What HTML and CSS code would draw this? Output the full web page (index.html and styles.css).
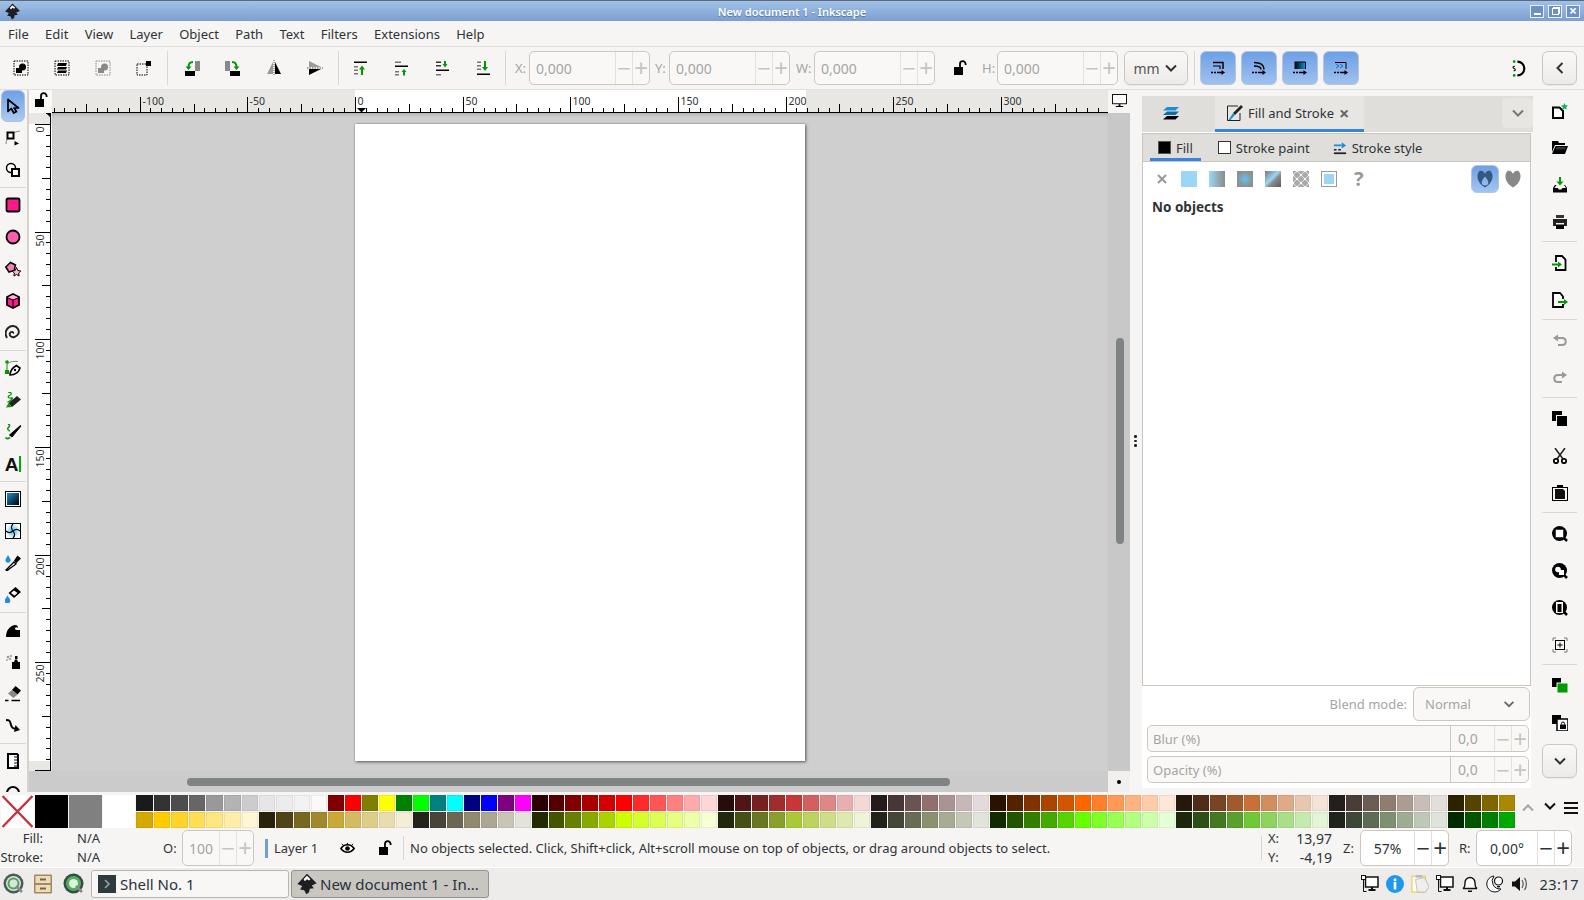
FILE: index.html
```html
<!DOCTYPE html>
<html lang="en">
<head>
<meta charset="utf-8">
<title>New document 1 - Inkscape</title>
<link rel="stylesheet" href="styles.css">
</head>
<body>
<svg class="sprite" xmlns="http://www.w3.org/2000/svg">
<defs>
<linearGradient id="gblue" x1="0" y1="0" x2="1" y2="1"><stop offset="0" stop-color="#1b8fd8"/><stop offset="1" stop-color="#000"/></linearGradient>
<linearGradient id="gbar" x1="0" y1="0" x2="1" y2="0"><stop offset="0" stop-color="#000"/><stop offset="1" stop-color="#1b8fd8"/></linearGradient>
<radialGradient id="gmesh"><stop offset="0" stop-color="#3fb8f5"/><stop offset="1" stop-color="#fff"/></radialGradient>
<symbol id="logo" viewBox="0 0 16 16"><path d="M8 0.500 15 7.500 11.500 9 13 11 10 11.500 9.500 14 7.500 15.500 6 12.500 3 12 4.500 9.500 1 8z" fill="#1d1d22"/><path d="M8 2 10.500 4.500 9.500 5.500 8 4.500 6.500 6 5.500 4.500z" fill="#fff"/></symbol>
<symbol id="sel-all" viewBox="0 0 16 16"><rect x="1" y="1" width="14" height="14" fill="none" stroke="#000" stroke-dasharray="1.500 1"/><circle cx="9.500" cy="7" r="3.500"/><rect x="3" y="8" width="6" height="5"/></symbol>
<symbol id="sel-layers" viewBox="0 0 16 16"><rect x="1" y="1" width="14" height="14" fill="none" stroke="#000" stroke-dasharray="1.500 1"/><path d="M4 3h9l-1 3H3zM4 7h9l-1 2.500H3zM4 10.500h9l-1 2.500H3z"/></symbol>
<symbol id="sel-none" viewBox="0 0 16 16"><rect x="1" y="1" width="14" height="14" fill="none" stroke="#888" stroke-dasharray="1.500 1"/><circle cx="9.500" cy="7" r="3.500" fill="#888"/><rect x="3" y="8" width="6" height="5" fill="#888"/></symbol>
<symbol id="sel-touch" viewBox="0 0 16 16"><rect x="1" y="4" width="10" height="11" fill="none" stroke="#000" stroke-dasharray="1.500 1"/><rect x="10" y="1" width="5" height="5"/></symbol>
<symbol id="rot-ccw" viewBox="0 0 16 16"><rect x="1" y="11" width="10" height="5"/><rect x="11" y="1" width="5" height="10" fill="#888"/><path d="M9 2C6 2 4.500 4 4.500 7" fill="none" stroke="#090" stroke-width="2"/><path d="M1.500 6.500h6L4.500 10z" fill="#090"/></symbol>
<symbol id="rot-cw" viewBox="0 0 16 16"><rect x="5" y="11" width="10" height="5"/><rect x="0" y="1" width="5" height="10" fill="#888"/><path d="M7 2c3 0 4.500 2 4.500 5" fill="none" stroke="#090" stroke-width="2"/><path d="M8.500 6.500h6L11.500 10z" fill="#090"/></symbol>
<symbol id="flip-h" viewBox="0 0 16 16"><path d="M7 2v12H1z" fill="#999"/><path d="M9 2v12h6z"/><path d="M8 0v16" stroke="#555" stroke-dasharray="1 1"/></symbol>
<symbol id="flip-v" viewBox="0 0 16 16"><path d="M2 1v6h12z" fill="#999"/><path d="M2 15V9h12z"/><path d="M0 8h16" stroke="#555" stroke-dasharray="1.500 1"/></symbol>
<symbol id="raise-top" viewBox="0 0 16 16"><path d="M1 1.500h13v1.500H1z"/><path d="M1 6h4v1.500H1zM1 9.500h4V11H1zM1 13h4v1.500H1z" fill="#777"/><path d="M9 15V8" stroke="#090" stroke-width="2"/><path d="M6 9.500 9 5.500 12 9.500z" fill="#090"/></symbol>
<symbol id="raise" viewBox="0 0 16 16"><path d="M1 1.500h6V3H1zM1 11h4v1.500H1zM1 14h4v1.500H1z" fill="#777"/><path d="M1 5.500h13V7H1z"/><path d="M10 15.500V11" stroke="#090" stroke-width="2"/><path d="M7.500 12 10 9l2.500 3z" fill="#090"/></symbol>
<symbol id="lower" viewBox="0 0 16 16"><path d="M1 1.500h5V3H1zM1 5h5v1.500H1z" fill="#333"/><path d="M1 14h5v1.500H1z" fill="#777"/><path d="M1 9.500h13V11H1z"/><path d="M10 1v4" stroke="#090" stroke-width="2"/><path d="M7.500 4 10 7.500 12.500 4z" fill="#090"/></symbol>
<symbol id="lower-bot" viewBox="0 0 16 16"><path d="M1 1.500h4V3H1zM1 5h4v1.500H1zM1 8.500h4V10H1z" fill="#777"/><path d="M1 13.500h13V15H1z"/><path d="M9 1v7" stroke="#090" stroke-width="2"/><path d="M6 7 9 11 12 7z" fill="#090"/></symbol>
<symbol id="lock" viewBox="0 0 16 16"><rect x="2" y="7" width="9" height="8"/><path d="M8 7V4a2.800 2.800 0 0 1 5.600 0v1" fill="none" stroke="#000" stroke-width="1.800"/></symbol>
<symbol id="snap-box" viewBox="0 0 16 16"><path d="M3 2.500h10V9" fill="none" stroke="#000" stroke-width="1.500"/><path d="M3 6h7v3" fill="none" stroke="#000" stroke-width="1.200"/><path d="M1 12.500h2m1 0h2m1 0h5" stroke="#000" stroke-width="1.500"/><path d="M11.500 10 15 12.500 11.500 15z"/></symbol>
<symbol id="snap-node" viewBox="0 0 16 16"><path d="M3 2.500c6 0 10 2 10 7M3 6c4 0 7 1 7 3.500" fill="none" stroke="#000" stroke-width="1.500"/><path d="M1 12.500h2m1 0h2m1 0h5" stroke="#000" stroke-width="1.500"/><path d="M11.500 10 15 12.500 11.500 15z"/></symbol>
<symbol id="snap-bitmap" viewBox="0 0 16 16"><rect x="2.500" y="2" width="11" height="7" fill="url(#gbar)"/><path d="M2.500 2h11v7" fill="none" stroke="#000"/><path d="M1 12.500h2m1 0h2m1 0h5" stroke="#000" stroke-width="1.500"/><path d="M11.500 10 15 12.500 11.500 15z"/></symbol>
<symbol id="snap-other" viewBox="0 0 16 16"><path d="M2 2.500h11V9" fill="none" stroke="#000"/><path d="M3 4l3 2-3 2M7 4l3 2-3 2" fill="none" stroke="#1b6fc0"/><path d="M1 12.500h2m1 0h2m1 0h5" stroke="#000" stroke-width="1.500"/><path d="M11.500 10 15 12.500 11.500 15z"/></symbol>
<symbol id="snap-main" viewBox="0 0 16 16"><path d="M6 1.500a6.500 6.500 0 1 1 0 13" fill="none" stroke="#000" stroke-width="2"/><circle cx="3" cy="1.500" r="1.300" fill="#090"/><circle cx="3" cy="14.500" r="1.300" fill="#090"/><path d="M3.500 6c-2-.5-2 1.500-.5 2s1.500 2.500-.5 2" fill="none" stroke="#000"/></symbol>
<symbol id="layers" viewBox="0 0 16 16"><path d="M4 2h12l-3.500 3.500H0z" fill="#1b8fd8"/><path d="M4 6.500h12l-3.500 3.500H0z" fill="#0d6fa8"/><path d="M4 11h12l-3.500 3.500H0z"/></symbol>
<symbol id="fillstroke" viewBox="0 0 16 16"><path d="M11 1H.5v14.500H13V8" fill="none" stroke="#222"/><path d="M14 0 16 2 8 10 6 8z" fill="#222"/><path d="M6 8 8 10 3.500 15H1.500z" fill="#1b8fd8"/></symbol>
<symbol id="strokestyle" viewBox="0 0 16 16"><path d="M1 5h9" stroke="#1b8fd8" stroke-width="2"/><path d="M10 1.500 15 5l-5 3.500z" fill="#1b8fd8"/><path d="M1 10h3m2 0h3" stroke="#222" stroke-width="1.500"/><path d="M1 14h14" stroke="#222" stroke-width="2"/></symbol>
<symbol id="chev-d" viewBox="0 0 16 16"><path d="M3 5.500 8 10.500 13 5.500" fill="none" stroke="currentColor" stroke-width="2"/></symbol>
<symbol id="chev-u" viewBox="0 0 16 16"><path d="M3 10.500 8 5.500 13 10.500" fill="none" stroke="currentColor" stroke-width="2"/></symbol>
<symbol id="chev-l" viewBox="0 0 16 16"><path d="M10.500 3 5.500 8 10.500 13" fill="none" stroke="currentColor" stroke-width="2"/></symbol>
<symbol id="fill-x" viewBox="0 0 16 16"><path d="M4 4l8 8M12 4l-8 8" stroke="#999" stroke-width="2"/></symbol>
<symbol id="rule-eo" viewBox="0 0 20 20"><path fill-rule="evenodd" d="M4.500 2C1 5 1.500 14 10 18.500 18.500 14 19 5 15.500 2 13 1 10.800 2.500 10 5 9.200 2.500 7 1 4.500 2zM10 7.500c-2.200 2.700-3.300 4.300-3.300 5.800a3.300 3.300 0 0 0 6.600 0c0-1.500-1.100-3.100-3.300-5.800z" fill="#33597f"/></symbol>
<symbol id="rule-nz" viewBox="0 0 20 20"><path d="M4.500 2C1 5 1.500 14 10 18.500 18.500 14 19 5 15.500 2 13 1 10.800 2.500 10 5 9.200 2.500 7 1 4.500 2z" fill="#888"/></symbol>
<symbol id="t-select" viewBox="0 0 16 16"><path d="M3 1.500v12l3.200-3 2.600 4.500 2.700-1.400L9 10h4.500z" fill="none" stroke="#000" stroke-width="1.700" stroke-linejoin="round"/></symbol>
<symbol id="t-node" viewBox="0 0 16 16"><path d="M1 14C1 7 7 2 15 1" fill="none" stroke="#888"/><rect x="2.500" y="2.500" width="6" height="6" fill="#fff" stroke="#000" stroke-width="2"/><path d="M9.500 11 14 13.500 9.500 15.500z"/></symbol>
<symbol id="t-tweak" viewBox="0 0 16 16"><circle cx="6" cy="6" r="4.500" fill="#fff" stroke="#000" stroke-width="1.500"/><rect x="7" y="7" width="7" height="7" fill="#fff" stroke="#000" stroke-width="2"/></symbol>
<symbol id="t-rect" viewBox="0 0 16 16"><rect x="1.500" y="1.500" width="13" height="13" rx="1.500" fill="#ff1a8c" stroke="#000" stroke-width="1.800"/></symbol>
<symbol id="t-circle" viewBox="0 0 16 16"><circle cx="8" cy="8" r="6.500" fill="#ff5cab" stroke="#000" stroke-width="1.800"/></symbol>
<symbol id="t-star" viewBox="0 0 16 16"><path d="M.8 6 5.500 1.500 10.500 4 9 9.500 4 11z" fill="#ff7ab8" stroke="#000" stroke-width="1.500"/><path d="M11.500 6.500 12.800 9.500 15.800 10 13.600 12l.5 3-2.600-1.500L8.900 15l.5-3L7.200 10l3-.5z" fill="#ffb3d9" stroke="#000"/></symbol>
<symbol id="t-box" viewBox="0 0 16 16"><path d="M8 1l6 3v8l-6 3-6-3V4z" fill="#ff1a8c" stroke="#000" stroke-width="1.800"/><path d="M2.500 4.500 8 7l5.500-2.500L8 2z" fill="#ffb3d9"/><path d="M8 7v8M2 4.500 8 7l6-2.500" fill="none" stroke="#000"/></symbol>
<symbol id="t-spiral" viewBox="0 0 16 16"><path d="M8 8.500c1-1.500-2-2.500-3-.5s1 5 4.500 4S15 7.500 13 4 6 0 3 3 0 9.500 2 13" fill="none" stroke="#222" stroke-width="1.900"/></symbol>
<symbol id="t-pen" viewBox="0 0 16 16"><path d="M2 4C5 1.500 9 1 13 1.500" fill="none" stroke="#888"/><circle cx="2" cy="2" r="1.800" fill="#090"/><rect x="0" y="10" width="4" height="4" fill="#090"/><path d="M2 4v6" stroke="#090"/><path d="M5 15c0-4.500 3-7.500 6.500-9.500L15 8c-1 3.500-4.500 7-10 7z" fill="#fff" stroke="#000" stroke-width="1.700"/><circle cx="10" cy="10" r="1.200"/></symbol>
<symbol id="t-pencil" viewBox="0 0 16 16"><path d="M3 0c4 0 4 2.500 1.500 3.500s-1 3 2 2.500-2 4-4 4" fill="none" stroke="#090" stroke-width="1.300"/><path d="M3.500 11 12 4l4 3.500-9 7.500z" fill="#222"/><path d="M1 15.500l2.500-4.500 3.500 4z" fill="#090"/></symbol>
<symbol id="t-calli" viewBox="0 0 16 16"><path d="M3 0c3 1 1 3 0 4s1 3 2 3" fill="none" stroke="#090" stroke-width="1.500"/><path d="M.5 13.500c1 1.500 3 1 4.500 0" fill="none" stroke="#090" stroke-width="1.700"/><path d="M4.500 11 15.500 1.500l.5.500L7 13z" fill="#000" stroke="#000"/></symbol>
<symbol id="t-grad" viewBox="0 0 16 16"><rect x=".5" y=".5" width="15" height="15" fill="#fff" stroke="#000"/><rect x="2" y="2" width="12" height="12" fill="url(#gblue)"/></symbol>
<symbol id="t-mesh" viewBox="0 0 16 16"><rect x=".5" y=".5" width="15" height="15" fill="url(#gmesh)" stroke="#000"/><path d="M8 8C6 5.500 6 3 8 1M8 8c2.500-2 5-2 7 0M8 8c2 2.500 2 5 0 7M8 8c-2.500 2-5 2-7 0" fill="none" stroke="#000" stroke-width="1.100"/></symbol>
<symbol id="t-dropper" viewBox="0 0 16 16"><path d="M3 0 .5 4.500a2.600 2.600 0 1 0 5 0z" fill="#1b8fd8"/><path d="M3.500 14.500 2 16l-1-1 1.500-1.500L9 7l2 2z" fill="#fff" stroke="#000" stroke-width="1.300"/><path d="M9 5.500 12.500.5 16 3.500 11 8.500z" fill="#000"/></symbol>
<symbol id="t-bucket" viewBox="0 0 16 16"><path d="M10.500 0 16 5 9 11 3.500 6z" fill="#000"/><path d="M9 3.500 12.500 6 9.500 8.500 6 6z" fill="#fff"/><path d="M2.500 8.500 0 12.500a2.800 2.800 0 1 0 5 0z" fill="#1b8fd8"/></symbol>
<symbol id="t-wave" viewBox="0 0 16 16"><path d="M1 15c0-6 3-11 9-12 2 0 3 1 3 3-1-1-3-1-3 1 0 1 2 1 5 1v7z"/></symbol>
<symbol id="t-spray" viewBox="0 0 16 16"><rect x="7" y="8" width="8" height="7"/><path d="M9 8l1-2.500h2L13 8z"/><rect x="10" y="2" width="2.500" height="3"/><circle cx="3" cy="3" r="1.300" fill="#999"/><circle cx="6" cy="2" r="1.100" fill="#999"/><circle cx="5" cy="5" r="1.300" fill="#aaa"/><circle cx="2" cy="6" r="1" fill="#aaa"/></symbol>
<symbol id="t-eraser" viewBox="0 0 16 16"><path d="M10.500 0 16 4.500 12.500 8.500 7 4z"/><path d="M7 4 12.500 8.500 8.500 12 3 7.500z" fill="#888"/><path d="M0 14.500h3.500m3 0H15" stroke="#000" stroke-width="1.500"/></symbol>
<symbol id="t-conn" viewBox="0 0 16 16"><path d="M1 2c4 0 4 1 5 5s3 3.500 6 4" fill="none" stroke="#000" stroke-width="2"/><path d="M10.500 7 15 12l-6 2z"/></symbol>
<symbol id="t-measure" viewBox="0 0 16 16"><path d="M3 1h9l1 1v13H3z" fill="#fff" stroke="#000" stroke-width="2"/><path d="M9 4h4M9 7h4M9 10h4M9 13h4" stroke="#000"/></symbol>
<symbol id="t-zoom" viewBox="0 0 16 16"><circle cx="8" cy="8" r="6" fill="none" stroke="#000" stroke-width="2"/></symbol>
<symbol id="r-new" viewBox="0 0 16 16"><path d="M1 4.500h6.500L11 8v7H1z" fill="#fff" stroke="#000" stroke-width="2"/><path d="M12.500 0l1.100 2.300 2.400.3-1.800 1.700.5 2.500-2.200-1.200-2.200 1.200.5-2.500L9 2.600l2.400-.3z" fill="#0b5"/></symbol>
<symbol id="r-open" viewBox="0 0 16 16"><path d="M0 1h6l1 2h6v2H3L0 12z"/><path d="M3.500 6H16l-3 8H0z"/><path d="M4.500 7h9.500l-1 2.500H3.500z" fill="#333"/></symbol>
<symbol id="r-save" viewBox="0 0 16 16"><path d="M8 0v5" stroke="#090" stroke-width="2"/><path d="M4.500 4.500 8 8.500l3.500-4z" fill="#090"/><path d="M3 8 1 11v4.500h14V11l-2-3h-1l2 3h-3.500L9.500 12.500h-3L6 11H2.500l2-3z"/></symbol>
<symbol id="r-print" viewBox="0 0 16 16"><rect x="4" y="1" width="8" height="3" fill="#333"/><path d="M1 5h14v7h-3V9H4v3H1z" fill="#222"/><rect x="4" y="10.500" width="8" height="4.500"/></symbol>
<symbol id="r-import" viewBox="0 0 16 16"><path d="M4 7V1h6l3.500 3.500V15H4v-3" fill="#fff" stroke="#000" stroke-width="1.800"/><path d="M0 9.500h7" stroke="#090" stroke-width="2"/><path d="M6 6.500 10 9.500 6 12.500z" fill="#090"/></symbol>
<symbol id="r-export" viewBox="0 0 16 16"><path d="M11 7V4.500L8 1H1v14h10v-3" fill="#fff" stroke="#000" stroke-width="1.800"/><path d="M6 10h7" stroke="#090" stroke-width="2"/><path d="M12 7l4 3-4 3z" fill="#090"/></symbol>
<symbol id="r-undo" viewBox="0 0 16 16"><path d="M4 5h6c5 0 5 7 0 7H6" fill="none" stroke="#999" stroke-width="2"/><path d="M6 1.500v7L1 5z" fill="#999"/></symbol>
<symbol id="r-redo" viewBox="0 0 16 16"><path d="M12 5H6c-5 0-5 7 0 7h4" fill="none" stroke="#999" stroke-width="2"/><path d="M10 1.500v7L15 5z" fill="#999"/></symbol>
<symbol id="r-copy" viewBox="0 0 16 16"><rect x="0" y="0" width="10" height="10"/><rect x="4.500" y="4.500" width="11" height="11" stroke="#f6f5f4"/></symbol>
<symbol id="r-cut" viewBox="0 0 16 16"><path d="M3 0l8 11M13 0 5 11" stroke="#222" stroke-width="1.500"/><circle cx="4" cy="13" r="2.200" fill="none" stroke="#000" stroke-width="1.800"/><circle cx="12" cy="13" r="2.200" fill="none" stroke="#000" stroke-width="1.800"/></symbol>
<symbol id="r-paste" viewBox="0 0 16 16"><rect x=".5" y="2.500" width="15" height="13" fill="none" stroke="#000"/><path d="M3 4h8l2 2v8H3z" fill="#111"/><rect x="5" y="0" width="6" height="3"/></symbol>
<symbol id="r-zsel" viewBox="0 0 16 16"><circle cx="7.500" cy="7.500" r="7.500"/><rect x="3.500" y="3.500" width="8" height="8" fill="#fff" stroke="#000" stroke-dasharray="1 1" stroke-width="1"/><path d="M12 12l3 3" stroke="#000" stroke-width="2.500"/></symbol>
<symbol id="r-zdraw" viewBox="0 0 16 16"><circle cx="7.500" cy="7.500" r="7.500"/><circle cx="6" cy="6.500" r="2.800" fill="#fff"/><rect x="7" y="7" width="5" height="5" fill="#fff"/><path d="M12 12l3 3" stroke="#000" stroke-width="2.500"/></symbol>
<symbol id="r-zpage" viewBox="0 0 16 16"><circle cx="7.500" cy="7.500" r="7.500"/><rect x="4.500" y="2.500" width="6" height="10" fill="#fff" stroke="#fff"/><rect x="5.500" y="4" width="4" height="8"/><path d="M12 12l3 3" stroke="#000" stroke-width="2.500"/></symbol>
<symbol id="r-zcenter" viewBox="0 0 16 16"><path d="M1 4V1h3M12 1h3v3M15 12v3h-3M4 15H1v-3" fill="none" stroke="#777"/><rect x="3.500" y="3.500" width="9" height="9" fill="none" stroke="#000"/><path d="M8 5.500v5M5.500 8h5" stroke="#000"/></symbol>
<symbol id="r-dup" viewBox="0 0 16 16"><rect x="0" y="0" width="9" height="9"/><rect x="5" y="5" width="11" height="10" fill="#090" stroke="#f6f5f4"/></symbol>
<symbol id="r-clone" viewBox="0 0 16 16"><rect x="0" y="0" width="9" height="9"/><rect x="5" y="4" width="11" height="12" fill="#fff" stroke="#000" stroke-width="1.500"/><rect x="8" y="9.500" width="6" height="4.500"/><path d="M9.500 9.500v-1a1.500 1.500 0 0 1 3 0v1" fill="none" stroke="#000"/></symbol>
<symbol id="eye" viewBox="0 0 16 16"><path d="M1 8c2-3 4-4 7-4s5 1 7 4c-2 3-4 4-7 4s-5-1-7-4z" fill="#fff" stroke="#000" stroke-width="1.800"/><circle cx="8" cy="8" r="2.500"/><path d="M2 3l2 2M8 2v2M14 3l-2 2" stroke="#000"/></symbol>
<symbol id="ball" viewBox="0 0 22 22"><circle cx="10.500" cy="10.500" r="10" fill="#4a5a5a"/><circle cx="10.500" cy="10.500" r="7.500" fill="#d3e8d5"/><circle cx="10.500" cy="10.500" r="5" fill="none" stroke="#56a05c" stroke-width="2"/><path d="M13 13 19 19" stroke="#888" stroke-width="2.500"/></symbol>
<symbol id="ball2" viewBox="0 0 22 22"><circle cx="10.500" cy="10.500" r="10" fill="#3a4a4a"/><circle cx="10.500" cy="10.500" r="7.500" fill="#4fb158"/><circle cx="10.500" cy="10.500" r="4.500" fill="#dff0df"/><path d="M13 13 19 19" stroke="#888" stroke-width="2.500"/></symbol>
<symbol id="cabinet" viewBox="0 0 20 20"><rect x="1" y="0.500" width="18" height="19" rx="1" fill="#a4895c"/><rect x="2.500" y="2" width="15" height="7" fill="#ecdcbc"/><rect x="2.500" y="11" width="15" height="7" fill="#ecdcbc"/><rect x="7" y="4.500" width="6" height="2" fill="#7a6440"/><rect x="7" y="13.500" width="6" height="2" fill="#7a6440"/></symbol>
<symbol id="term" viewBox="0 0 18 18"><rect width="18" height="18" fill="#2f3a3c"/><path d="M7 5l4 4-4 4" fill="none" stroke="#9aa6a8" stroke-width="1.500"/></symbol>
<symbol id="tray-net" viewBox="0 0 18 18"><rect x="4.500" y="2" width="12.500" height="10" fill="#fff" stroke="#111" stroke-width="1.500"/><path d="M7.500 15h7M11 12v3" stroke="#111" stroke-width="2"/><rect x="0.500" y="0.500" width="4" height="4" fill="#fff" stroke="#111"/><path d="M2.500 4.500v12h3" fill="none" stroke="#111"/></symbol>
<symbol id="tray-info" viewBox="0 0 18 18"><circle cx="9" cy="9" r="9" fill="#1f97ee"/><rect x="7.700" y="7" width="2.600" height="7.500" fill="#fff"/><circle cx="9" cy="4.700" r="1.500" fill="#fff"/></symbol>
<symbol id="tray-clip" viewBox="0 0 20 20"><rect x="1" y="1.500" width="15" height="17.500" fill="#fff" stroke="#f3d54e" stroke-width="1.500"/><path d="M5 5 15 3l5 10-4 6-9 0z" fill="#eee" stroke="#bbb"/><rect x="5" y="0" width="8" height="3" rx="1" fill="#bbb"/></symbol>
<symbol id="tray-bell" viewBox="0 0 18 18"><path d="M2 13.500c2-1 2-3 2-6a5 5 0 0 1 10 0c0 3 0 5 2 6z" fill="#fff" stroke="#111" stroke-width="1.400"/><path d="M7 15.500h4V17H7z" fill="#111"/></symbol>
<symbol id="tray-moon" viewBox="0 0 18 18"><path d="M8 1a8 8 0 1 0 7 13A8 8 0 0 1 8 1z" fill="#fff" stroke="#111"/><circle cx="12.500" cy="6" r="4" fill="#fff" stroke="#111" stroke-width="1.200"/><path d="M11 11.500h3M11.500 13h2" stroke="#111"/></symbol>
<symbol id="tray-vol" viewBox="0 0 18 18"><path d="M1 6.500h3L9 2v14l-5-4.500H1z" fill="#111"/><path d="M11 5c1.500 2 1.500 6 0 8M13.500 3c2.500 3 2.500 9 0 12" fill="none" stroke="#555" stroke-width="1.200"/></symbol>
</defs>
</svg>

<div class="app">
  <header class="titlebar">
    <svg class="title-logo"><use href="#logo"/></svg>
    <span class="title-text">New document 1 - Inkscape</span>
    <div class="win-btns">
      <span class="win-btn"><i class="wb-min"></i></span>
      <span class="win-btn"><i class="wb-max"></i></span>
      <span class="win-btn wb-close">×</span>
    </div>
  </header>

  <nav class="menubar">
    <span>File</span><span>Edit</span><span>View</span><span>Layer</span><span>Object</span><span>Path</span><span>Text</span><span>Filters</span><span>Extensions</span><span>Help</span>
  </nav>

  <div class="toolbar">
    <span class="tb"><svg class="ic"><use href="#sel-all"/></svg></span>
    <span class="tb"><svg class="ic"><use href="#sel-layers"/></svg></span>
    <span class="tb"><svg class="ic"><use href="#sel-none"/></svg></span>
    <span class="tb"><svg class="ic"><use href="#sel-touch"/></svg></span>
    <i class="vsep vsep-a"></i>
    <span class="tb"><svg class="ic"><use href="#rot-ccw"/></svg></span>
    <span class="tb"><svg class="ic"><use href="#rot-cw"/></svg></span>
    <span class="tb"><svg class="ic"><use href="#flip-h"/></svg></span>
    <span class="tb"><svg class="ic"><use href="#flip-v"/></svg></span>
    <i class="vsep vsep-b"></i>
    <span class="tb"><svg class="ic"><use href="#raise-top"/></svg></span>
    <span class="tb"><svg class="ic"><use href="#raise"/></svg></span>
    <span class="tb"><svg class="ic"><use href="#lower"/></svg></span>
    <span class="tb"><svg class="ic"><use href="#lower-bot"/></svg></span>
    <i class="vsep vsep-c"></i>
    <label class="coord-label lbl-x">X:</label>
    <div class="spin coord"><span class="spin-val">0,000</span><span class="spin-b">−</span><span class="spin-b">+</span></div>
    <label class="coord-label lbl-y">Y:</label>
    <div class="spin coord"><span class="spin-val">0,000</span><span class="spin-b">−</span><span class="spin-b">+</span></div>
    <label class="coord-label lbl-w">W:</label>
    <div class="spin coord"><span class="spin-val">0,000</span><span class="spin-b">−</span><span class="spin-b">+</span></div>
    <svg class="ic lock-wh"><use href="#lock"/></svg>
    <label class="coord-label lbl-h">H:</label>
    <div class="spin coord"><span class="spin-val">0,000</span><span class="spin-b">−</span><span class="spin-b">+</span></div>
    <div class="btn unit">mm<svg class="chev"><use href="#chev-d"/></svg></div>
    <i class="vsep vsep-d"></i>
    <span class="toggle"><svg class="ic"><use href="#snap-box"/></svg></span>
    <span class="toggle"><svg class="ic"><use href="#snap-node"/></svg></span>
    <span class="toggle"><svg class="ic"><use href="#snap-bitmap"/></svg></span>
    <span class="toggle"><svg class="ic"><use href="#snap-other"/></svg></span>
    <svg class="ic snap-main"><use href="#snap-main"/></svg>
    <div class="btn collapse"><svg class="chev"><use href="#chev-l"/></svg></div>
  </div>

  <main class="main">
    <aside class="tools">
      <span class="tool active"><svg class="ic"><use href="#t-select"/></svg></span>
      <span class="tool"><svg class="ic"><use href="#t-node"/></svg></span>
      <span class="tool"><svg class="ic"><use href="#t-tweak"/></svg></span>
      <i class="hsep"></i>
      <span class="tool"><svg class="ic"><use href="#t-rect"/></svg></span>
      <span class="tool"><svg class="ic"><use href="#t-circle"/></svg></span>
      <span class="tool"><svg class="ic"><use href="#t-star"/></svg></span>
      <span class="tool"><svg class="ic"><use href="#t-box"/></svg></span>
      <span class="tool"><svg class="ic"><use href="#t-spiral"/></svg></span>
      <i class="hsep"></i>
      <span class="tool"><svg class="ic"><use href="#t-pen"/></svg></span>
      <span class="tool"><svg class="ic"><use href="#t-pencil"/></svg></span>
      <span class="tool"><svg class="ic"><use href="#t-calli"/></svg></span>
      <span class="tool text-tool"><b>A</b><i></i></span>
      <i class="hsep"></i>
      <span class="tool"><svg class="ic"><use href="#t-grad"/></svg></span>
      <span class="tool"><svg class="ic"><use href="#t-mesh"/></svg></span>
      <span class="tool"><svg class="ic"><use href="#t-dropper"/></svg></span>
      <span class="tool"><svg class="ic"><use href="#t-bucket"/></svg></span>
      <i class="hsep"></i>
      <span class="tool"><svg class="ic"><use href="#t-wave"/></svg></span>
      <span class="tool"><svg class="ic"><use href="#t-spray"/></svg></span>
      <span class="tool"><svg class="ic"><use href="#t-eraser"/></svg></span>
      <span class="tool"><svg class="ic"><use href="#t-conn"/></svg></span>
      <i class="hsep"></i>
      <span class="tool"><svg class="ic"><use href="#t-measure"/></svg></span>
      <span class="tool"><svg class="ic"><use href="#t-zoom"/></svg></span>
    </aside>

    <section class="workspace">
      <div class="ruler-lock"><svg class="ic"><use href="#lock"/></svg></div>
      <svg class="ruler" id="hruler"></svg>
      <div class="monitor"><svg viewBox="0 0 16 14"><rect x=".5" y=".5" width="15" height="10" fill="#fff" stroke="#000"/><path d="M4 13h8v1H4zM7 11h2v2H7z"/></svg></div>
      <svg class="ruler" id="vruler"></svg>
      <div class="canvas"><div class="page"></div></div>
      <div class="vscroll"><i></i></div>
      <div class="blank"></div>
      <div class="hscroll"><i></i></div>
      <div class="corner"><i></i></div>
    </section>

    <div class="handle"><i></i><i></i><i></i></div>

    <section class="dock">
      <div class="dock-tabs">
        <span class="dock-tab-layers"><svg class="ic"><use href="#layers"/></svg></span>
        <span class="dock-tab"><svg class="ic"><use href="#fillstroke"/></svg>Fill and Stroke<b>×</b></span>
        <span class="dock-more"><svg class="chev"><use href="#chev-d"/></svg></span>
      </div>
      <div class="dock-body">
        <div class="fs-frame">
          <div class="fs-tabs">
            <span class="fs-tab on"><i class="sq sq-black"></i>Fill</span>
            <span class="fs-tab"><i class="sq sq-empty"></i>Stroke paint</span>
            <span class="fs-tab"><svg class="ic ic-s"><use href="#strokestyle"/></svg>Stroke style</span>
          </div>
          <div class="paints">
            <svg class="ic p-x"><use href="#fill-x"/></svg>
            <i class="p p-flat"></i><i class="p p-lin"></i><i class="p p-rad"></i><i class="p p-mesh"></i><i class="p p-pat"></i><i class="p p-swatch"></i>
            <span class="p-q">?</span>
            <span class="rule on"><svg><use href="#rule-eo"/></svg></span>
            <span class="rule"><svg><use href="#rule-nz"/></svg></span>
          </div>
          <div class="no-obj">No objects</div>
        </div>
        <div class="blend-row">
          <span>Blend mode:</span>
          <div class="blend-sel">Normal<svg class="chev"><use href="#chev-d"/></svg></div>
        </div>
        <div class="slider-row slider-blur"><span class="sl-label">Blur (%)</span><span class="sl-val">0,0</span><span class="spin-b">−</span><span class="spin-b">+</span></div>
        <div class="slider-row"><span class="sl-label">Opacity (%)</span><span class="sl-val">0,0</span><span class="spin-b">−</span><span class="spin-b">+</span></div>
      </div>
    </section>

    <aside class="cmds">
      <span class="cmd"><svg class="ic"><use href="#r-new"/></svg></span>
      <span class="cmd"><svg class="ic"><use href="#r-open"/></svg></span>
      <span class="cmd"><svg class="ic"><use href="#r-save"/></svg></span>
      <span class="cmd"><svg class="ic"><use href="#r-print"/></svg></span>
      <i class="cmd-sep"></i>
      <span class="cmd"><svg class="ic"><use href="#r-import"/></svg></span>
      <span class="cmd"><svg class="ic"><use href="#r-export"/></svg></span>
      <i class="cmd-sep"></i>
      <span class="cmd"><svg class="ic"><use href="#r-undo"/></svg></span>
      <span class="cmd"><svg class="ic"><use href="#r-redo"/></svg></span>
      <i class="cmd-sep"></i>
      <span class="cmd"><svg class="ic"><use href="#r-copy"/></svg></span>
      <span class="cmd"><svg class="ic"><use href="#r-cut"/></svg></span>
      <span class="cmd"><svg class="ic"><use href="#r-paste"/></svg></span>
      <i class="cmd-sep"></i>
      <span class="cmd"><svg class="ic"><use href="#r-zsel"/></svg></span>
      <span class="cmd"><svg class="ic"><use href="#r-zdraw"/></svg></span>
      <span class="cmd"><svg class="ic"><use href="#r-zpage"/></svg></span>
      <span class="cmd"><svg class="ic"><use href="#r-zcenter"/></svg></span>
      <i class="cmd-sep"></i>
      <span class="cmd"><svg class="ic"><use href="#r-dup"/></svg></span>
      <span class="cmd"><svg class="ic"><use href="#r-clone"/></svg></span>
      <div class="btn cmd-more"><svg class="chev"><use href="#chev-d"/></svg></div>
    </aside>
  </main>

  <div class="palette">
    <div class="big big-none"><svg viewBox="0 0 32 33"><path d="M1 1l30 31M31 1 1 32" stroke="#c8303c" stroke-width="2.400"/></svg></div>
    <div class="big big-black"></div>
    <div class="big big-gray"></div>
    <div class="big big-white"></div>
    <div class="swatches" id="swatches"></div>
    <div class="pal-ctl">
      <svg class="chev pal-up"><use href="#chev-u"/></svg>
      <svg class="chev pal-down"><use href="#chev-d"/></svg>
      <span class="pal-menu"><i></i><i></i><i></i></span>
    </div>
  </div>

  <footer class="status">
    <div class="fs-ind">
      <span class="k">Fill:</span><span class="v">N/A</span>
      <span class="k">Stroke:</span><span class="v">N/A</span>
    </div>
    <span class="o-label">O:</span>
    <div class="spin o-spin"><span class="spin-val">100</span><span class="spin-b">−</span><span class="spin-b">+</span></div>
    <i class="layer-bar"></i>
    <span class="layer-name">Layer 1</span>
    <svg class="ic eye"><use href="#eye"/></svg>
    <svg class="ic st-lock"><use href="#lock"/></svg>
    <i class="vsep st-sep"></i>
    <span class="message">No objects selected. Click, Shift+click, Alt+scroll mouse on top of objects, or drag around objects to select.</span>
    <i class="vsep st-sep2"></i>
    <div class="xy"><span>X:</span><span class="num">13,97</span><span>Y:</span><span class="num">-4,19</span></div>
    <span class="z-label">Z:</span>
    <div class="spin on z-spin"><span class="spin-val">57%</span><span class="spin-b">−</span><span class="spin-b">+</span></div>
    <span class="r-label">R:</span>
    <div class="spin on r-spin"><span class="spin-val">0,00°</span><span class="spin-b">−</span><span class="spin-b">+</span></div>
  </footer>

  <div class="taskbar">
    <svg class="tk-ball"><use href="#ball"/></svg>
    <svg class="tk-cab"><use href="#cabinet"/></svg>
    <svg class="tk-ball tk-ball2"><use href="#ball2"/></svg>
    <div class="task"><svg class="task-ic"><use href="#term"/></svg>Shell No. 1</div>
    <div class="task task-active"><svg class="task-ic task-logo"><use href="#logo"/></svg>New document 1 - In...</div>
    <div class="tray">
      <svg><use href="#tray-net"/></svg>
      <svg><use href="#tray-info"/></svg>
      <svg><use href="#tray-clip"/></svg>
      <svg><use href="#tray-net"/></svg>
      <svg><use href="#tray-bell"/></svg>
      <svg><use href="#tray-moon"/></svg>
      <svg><use href="#tray-vol"/></svg>
      <span class="clock">23:17</span>
    </div>
  </div>
</div>
<script src="app.js"></script>
</body>
</html>
```

FILE: styles.css
```css
* { box-sizing: border-box; }
html, body { margin: 0; padding: 0; }
body { width: 1584px; height: 900px; overflow: hidden; background: #f6f5f4; color: #2e3436; font-family: "Noto Sans", sans-serif; font-size: 13px; }
i { display: block; font-style: normal; }
.sprite { position: absolute; width: 0; height: 0; }
.app { display: flex; flex-direction: column; height: 900px; }
.ic { display: block; width: 16px; height: 16px; flex: none; }
.chev { display: block; width: 16px; height: 16px; color: #2e3436; }

/* title bar */
.titlebar { position: relative; flex: none; height: 21px; display: flex; align-items: center; background: linear-gradient(#a1c1e6, #7b9fd1); border-top: 1px solid #5b6a7d; }
.title-logo { width: 17px; height: 17px; margin-left: 4px; }
.title-text { position: absolute; left: 0; right: 0; text-align: center; color: #fff; font-size: 11px; font-weight: 600; text-shadow: 0 1px 1px #53719b; }
.win-btns { margin-left: auto; margin-right: 4px; display: flex; gap: 4px; }
.win-btn { width: 14px; height: 13px; border: 1px solid #eaf1fa; background: #6e90c4; display: flex; align-items: center; justify-content: center; color: #fff; font-size: 14px; font-weight: 700; line-height: 1; }
.wb-min { width: 7px; height: 2px; background: #fff; margin-top: 5px; }
.wb-max { width: 7px; height: 7px; border: 1px solid #fff; box-shadow: 1px -1px 0 #fff; }

/* menu */
.menubar { flex: none; height: 26px; display: flex; align-items: center; padding: 1px 0 0 8px; gap: 16.300px; border-bottom: 1px solid #e1dedb; font-size: 13px; }

/* main toolbar */
.toolbar { flex: none; height: 43px; display: flex; align-items: center; border-bottom: 1px solid #e1dedb; }
.tb { width: 41px; height: 34px; display: flex; align-items: center; justify-content: center; flex: none; }
.vsep { width: 1px; height: 34px; background: #dad7d3; flex: none; }
.vsep-a { margin: 0 3px; }
.vsep-b { margin: 0 1px 0 3px; }
.vsep-c { margin-left: 1px; margin-right: 9px; }
.vsep-d { margin: 0 5px 0 6px; }
.coord-label { color: #a5a5a3; font-size: 13px; }
.lbl-x { width: 14px; }
.lbl-y { width: 14px; margin-left: 5px; }
.lbl-w { width: 18px; margin-left: 6px; }
.lbl-h { width: 15px; margin-left: 14px; }
.spin { display: flex; height: 34px; border: 1px solid #cdc7c2; border-radius: 5px; background: #f9f8f7; color: #a5a5a3; flex: none; align-items: stretch; }
.spin-val { flex: 1; padding-left: 6px; display: flex; align-items: center; font-size: 14px; }
.spin-b { width: 17px; flex: none; border-left: 1px solid #e4e1dd; display: flex; align-items: center; justify-content: center; font-size: 24px; line-height: 1; color: #c6c4c1; }
.spin.on .spin-b { color: #2e3436; }
.spin.on { background: #fff; color: #2e3436; }
.coord { width: 121px; }
.lock-wh { margin-left: 17px; margin-right: 0; }
.btn { display: flex; align-items: center; justify-content: center; height: 34px; border: 1px solid #cdc7c2; border-radius: 6px; background: linear-gradient(#f9f8f7, #edebe9); box-shadow: 0 1px 1px #0000000d; flex: none; }
.unit { width: 64px; margin-left: 6px; gap: 3px; color: #555; font-size: 14px; }
.toggle { width: 36px; height: 34px; border: 1px solid #b5c6da; border-radius: 6px; background: linear-gradient(#6da0e6, #9fc1ef); display: flex; align-items: center; justify-content: center; margin-right: 5px; flex: none; }
.snap-main { margin-left: 147px; width: 17px; height: 17px; }
.collapse { width: 35px; margin-left: auto; margin-right: 7px; }

/* central area */
.main { flex: none; height: 702px; display: flex; }
.tools { flex: none; width: 29px; border-right: 2px solid #d6d3cf; display: flex; flex-direction: column; overflow: hidden; align-items: flex-start; }
.tool { width: 24px; height: 32px; flex: none; margin-left: 1px; display: flex; align-items: center; justify-content: center; }
.tool.active { border: 1px solid #a9c0de; border-radius: 6px; background: linear-gradient(#6da0e6, #adcbf1); }
.hsep { flex: none; width: 26px; height: 1px; margin: 1px 0; background: #dad7d3; }
.text-tool b { font-family: "Liberation Sans", sans-serif; font-size: 19px; font-weight: 700; color: #111; line-height: 1; }
.text-tool i { width: 2px; height: 16px; background: #0a0; margin-left: 1px; }

.workspace { flex: none; width: 1101px; display: grid; grid-template-columns: 23px 1056px 22px; grid-template-rows: 23px 658px 21px; background: #cbcbcb; }
.ruler-lock { background: #f8f8f7; display: flex; align-items: center; justify-content: center; padding: 0 0 3px 0; }
.ruler { display: block; width: 100%; height: 100%; background: #e8e7e3; }
.ruler text { font-family: "Noto Sans", sans-serif; font-size: 10.500px; fill: #333; }
.monitor { background: #f6f5f4; display: flex; justify-content: center; padding: 4px 0 0; }
.monitor svg { width: 15px; height: 13px; }
.canvas { position: relative; background: #cfcfcf; overflow: hidden; box-shadow: inset 0 3px 3px -1px #00000022; }
.page { position: absolute; left: 303px; top: 11px; width: 450px; height: 637px; background: #fff; box-shadow: 1px 1px 3px #0000008c, 0 0 1px #00000066; }
.vscroll { background: #c8c8c8; position: relative; }
.vscroll i { position: absolute; left: 8px; top: 225px; width: 8px; height: 206px; border-radius: 4px; background: #7f8383; }
.blank, .hscroll { background: #cbcbcb; }
.hscroll { position: relative; }
.hscroll i { position: absolute; left: 135px; top: 7px; height: 8px; width: 763px; border-radius: 4px; background: #7f8383; }
.corner { background: #f1f0ee; display: flex; align-items: center; justify-content: center; }
.corner i { width: 4px; height: 4px; border-radius: 50%; background: #000; }

.handle { flex: none; width: 12px; display: flex; flex-direction: column; align-items: center; justify-content: center; gap: 2px; padding-right: 1px; }
.handle i { width: 2.500px; height: 2.500px; border-radius: 50%; background: #222; }

/* dock */
.dock { flex: none; width: 391px; padding-top: 6px; display: flex; flex-direction: column; height: 698px; }
.dock-tabs { flex: none; height: 36px; display: flex; background: #e0dedb; }
.dock-tab-layers { width: 73px; display: flex; align-items: center; justify-content: center; padding: 0 15px 3px 0; }
.dock-tab { width: 149px; display: flex; align-items: center; background: #e8e6e3; border-bottom: 3px solid #3584e4; padding-left: 12px; }
.dock-tab .ic { margin-right: 5px; }
.dock-tab b { margin-left: 5px; font-size: 18px; font-weight: 700; color: #666; line-height: 1; }
.dock-more { margin-left: auto; margin-top: 2px; width: 31px; height: 30px; border-radius: 5px; background: #e8e6e3; display: flex; align-items: center; justify-content: center; }
.dock-more .chev { color: #777; }
.dock-body { flex: 1; background: #fff; width: 389px; display: flex; flex-direction: column; }
.fs-frame { flex: none; height: 553px; margin-top: 1px; border: 1px solid #c9c6c1; }
.fs-tabs { height: 28px; display: flex; background: #e0dedb; border-bottom: 1px solid #c9c6c1; padding-left: 7px; }
.fs-tab { display: flex; align-items: center; padding: 0 8px; color: #2e3436; height: 27px; }
.fs-tab.on { border-bottom: 3px solid #3584e4; padding-top: 3px; margin-right: 9px; }
.fs-tab + .fs-tab { margin-right: 7px; }
.sq { width: 13px; height: 13px; margin-right: 5px; flex: none; border: 1px solid #555; }
.sq-black { background: #000; }
.sq-empty { background: #fff; border: 1.500px solid #333; }
.ic-s { width: 14px; height: 14px; margin-right: 5px; }
.paints { height: 34px; display: flex; align-items: center; padding-left: 11px; position: relative; }
.p-x { width: 16px; height: 16px; margin-right: 11px; }
.p { width: 16px; height: 16px; margin-right: 12px; flex: none; }
.p-flat { background: #9bd6f6; }
.p-lin { background: linear-gradient(90deg, #9bd6f6, #8b8b8b); }
.p-rad { background: radial-gradient(circle, #5cc3f5, #8f8f8f 70%); }
.p-mesh { background: linear-gradient(135deg, #777, #9bd6f6 45%, #8a8a8a 60%, #5a5a5a); }
.p-pat { background: radial-gradient(circle, #aaa 2.500px, transparent 3px) 0 0 / 8px 8px, radial-gradient(circle, #aaa 2.500px, #f6f6f6 3px) 4px 4px / 8px 8px; }
.p-swatch { background: #9bd6f6; border: 1px solid #999; outline: 2px solid #fff; outline-offset: -3px; }
.p-q { font-size: 20px; font-weight: 700; color: #999; line-height: 1; margin-left: 5px; }
.rule { position: absolute; top: 3px; width: 28px; height: 28px; display: flex; align-items: center; justify-content: center; border-radius: 6px; left: 328px; }
.rule.on { background: linear-gradient(#6da0e6, #a3c5f0); border: 1px solid #b5c6da; }
.rule + .rule { left: 356px; }
.rule svg { width: 20px; height: 20px; }
.no-obj { font-weight: 700; padding-left: 9px; font-size: 13.500px; margin-top: 1px; line-height: 20px; }
.blend-row { flex: none; display: flex; align-items: center; justify-content: flex-end; gap: 6px; height: 34px; margin-top: 1px; padding-right: 1px; color: #a5a5a3; }
.blend-sel { width: 117px; height: 34px; border: 1px solid #cdc7c2; border-radius: 6px; background: #f9f8f7; display: flex; align-items: center; justify-content: space-between; padding: 0 13px 0 11px; }
.blend-sel .chev { color: #666; width: 14px; height: 14px; }
.slider-row { flex: none; display: flex; height: 27px; margin: 4px 0 0 5px; width: 382px; border: 1px solid #cdc7c2; border-radius: 5px; background: #f9f8f7; color: #a5a5a3; align-items: stretch; }
.sl-label { width: 303px; padding-left: 5px; display: flex; align-items: center; border-right: 1px solid #cdc7c2; }
.sl-val { flex: 1; padding-left: 7px; display: flex; align-items: center; font-size: 14px; }

/* right commands */
.cmds { flex: none; width: 51px; padding: 2px 0 0 9px; display: flex; flex-direction: column; }
.cmd { width: 35px; height: 37px; flex: none; display: flex; align-items: center; justify-content: center; }
.cmd-sep { flex: none; height: 1px; margin: 1px 0 2px 0; width: 35px; background: #dad7d3; }
.cmd-more { width: 35px; margin-top: 3px; }

/* palette */
.palette { flex: none; height: 37px; display: flex; align-items: flex-start; padding: 3px 0 0 1px; background: #f6f5f4; }
.big { flex: none; height: 33px; width: 33px; margin-right: 1px; }
.big svg { display: block; width: 33px; height: 33px; }
.big-none { background: #fff; }
.big-black { background: #000; }
.big-gray { background: #808080; }
.big-white { background: #fff; width: 32px; }
.swatches { flex: none; width: 1381px; display: grid; grid-template-columns: repeat(7, 17.600px) repeat(4, 17.200px) repeat(70, 16.980px); grid-template-rows: 16px 16px; row-gap: 1px; }
.swatches i { margin-right: 1px; box-shadow: inset 0 0 0 1px #0000000f; }
.pal-ctl { flex: 1; position: relative; }
.pal-up { position: absolute; left: 3px; top: 5px; color: #a5a5a3; }
.pal-down { position: absolute; left: 25px; top: 3px; color: #111; }
.pal-menu { position: absolute; left: 47px; top: 7px; display: flex; flex-direction: column; gap: 3px; }
.pal-menu i { width: 14px; height: 2px; background: #111; }

/* status */
.status { flex: none; height: 39px; display: flex; align-items: center; border-bottom: 1px solid #fff; }
.fs-ind { flex: none; width: 110px; display: grid; grid-template-columns: 43px 34px; column-gap: 34px; line-height: 19px; }
.k { text-align: right; }
.v { white-space: nowrap; }
.o-label { margin-left: 53px; width: 19px; }
.o-spin { width: 72px; height: 36px; color: #a5a5a3; }
.layer-bar { width: 3px; height: 19px; background: #6f9fd4; margin-left: 11px; }
.layer-name { margin-left: 6px; width: 66px; }
.eye { width: 15px; height: 15px; }
.st-lock { margin-left: 22px; }
.st-sep { height: 24px; margin: 0 6px 0 10px; }
.message { white-space: nowrap; width: 851px; }
.st-sep2 { height: 24px; }
.xy { margin-left: 6px; width: 64px; display: grid; grid-template-columns: 1fr auto; line-height: 19px; }
.num { text-align: right; font-size: 14px; }
.z-label { margin-left: 11px; width: 17px; }
.z-spin { width: 89px; height: 36px; }
.z-spin .spin-val { justify-content: center; padding: 0; }
.r-label { margin-left: 10px; width: 17px; }
.r-spin { width: 96px; height: 36px; }
.r-spin .spin-val { justify-content: center; padding: 0; }

/* taskbar */
.taskbar { flex: 1; display: flex; align-items: center; background: #edecea; color: #27323a; font-size: 15px; }
.tk-ball { width: 22px; height: 22px; margin-left: 3px; flex: none; }
.tk-cab { width: 20px; height: 20px; margin-left: 8px; flex: none; }
.tk-ball2 { margin-left: 10px; }
.task { width: 198px; height: 28px; margin-left: 6px; display: flex; align-items: center; padding-left: 6px; border: 1px solid #b8b5b0; border-radius: 3px; background: #f8f7f6; flex: none; }
.task-active { margin-left: 2px; background: #c9c6c2; border-color: #96938e; white-space: nowrap; }
.task-ic { width: 18px; height: 18px; margin-right: 4px; flex: none; }
.task-logo { width: 22px; height: 22px; margin-left: -2px; margin-right: 2px; }
.tray { margin-left: auto; display: flex; align-items: center; gap: 7px; padding-right: 5px; }
.tray svg { width: 18px; height: 18px; display: block; }
.clock { margin-left: 3px; font-size: 14.500px; letter-spacing: .5px; }
```

FILE: app.js
```js
var NS = "http://www.w3.org/2000/svg";

function addLabel(svg, x, y, text, rot) {
  var t = document.createElementNS(NS, "text");
  t.textContent = text;
  if (rot) {
    t.setAttribute("transform", "translate(" + x + " " + y + ") rotate(-90)");
    t.setAttribute("text-anchor", "end");
  } else {
    t.setAttribute("x", x);
    t.setAttribute("y", y);
  }
  svg.appendChild(t);
}

function addRect(svg, x, y, w, h, fill) {
  var r = document.createElementNS(NS, "rect");
  r.setAttribute("x", x); r.setAttribute("y", y);
  r.setAttribute("width", w); r.setAttribute("height", h);
  r.setAttribute("fill", fill);
  svg.appendChild(r);
}

function addPath(svg, d) {
  var p = document.createElementNS(NS, "path");
  p.setAttribute("d", d);
  p.setAttribute("stroke", "#000");
  p.setAttribute("stroke-width", "1");
  p.setAttribute("fill", "none");
  p.setAttribute("shape-rendering", "crispEdges");
  svg.appendChild(p);
}

var STEP = 107.66 / 10;

function buildH() {
  var svg = document.getElementById("hruler");
  var origin = 303, len = 1056, h = 23;
  addRect(svg, origin, 0, 451, h, "#fff");
  var d = "M0 " + (h - 0.5) + "H" + len;
  for (var i = -28; i < 72; i++) {
    var x = Math.round(origin + i * STEP) + 0.5;
    if (x < 0 || x > len) continue;
    var size = i % 10 === 0 ? 16 : (i % 5 === 0 ? 9 : 5);
    d += "M" + x + " " + (h - size) + "V" + h;
    if (i % 10 === 0) addLabel(svg, x + 2, 15, String(i * 5), false);
  }
  addPath(svg, d);
  var tri = document.createElementNS(NS, "path");
  tri.setAttribute("d", "M" + (origin + 2) + " 18h9l-4.500 4.500z");
  svg.appendChild(tri);
}

function buildV() {
  var svg = document.getElementById("vruler");
  var origin = 11, len = 658, w = 23;
  addRect(svg, 0, origin, w, 637, "#fff");
  var d = "M" + (w - 1.5) + " 0V" + len;
  for (var i = -1; i < 61; i++) {
    var y = Math.round(origin + i * STEP) + 0.5;
    if (y < 0 || y > len) continue;
    var size = i % 10 === 0 ? 16 : (i % 5 === 0 ? 9 : 5);
    d += "M" + (w - 1 - size) + " " + y + "H" + (w - 1);
    if (i % 10 === 0) addLabel(svg, 15, y + 2, String(i * 5), true);
  }
  addPath(svg, d);
  var tri = document.createElementNS(NS, "path");
  tri.setAttribute("d", "M" + (w - 6) + " 0H" + (w - 1) + "V5z");
  svg.appendChild(tri);
}

var TOP = "1a1a1a 333333 4d4d4d 666666 999999 b3b3b3 cccccc e6e6e6 ececec f2f2f2 f9f9f9 800000 ff0000 808000 ffff00 008000 00ff00 008080 00ffff 000080 0000ff 800080 ff00ff 2b0000 550000 800000 aa0000 d40000 ff0000 ff2a2a ff5555 ff8080 ffaaaa ffd5d5 280b0b 501616 782121 a02c2c c83737 d35f5f de8787 e9afaf f4d7d7 241c1c 483737 6c5353 916f6f ac9393 c8b7b7 e3dbdb 2b1100 552200 803300 aa4400 d45500 ff6600 ff7f2a ff9955 ffb380 ffccaa ffe6d5 28170b 502d16 784421 a05a2c c87137 d38d5f deaa87 e9c6af f4e3d7 241f1c 483e37 6c5d53 917c6f ac9d93 c8beb7 e3dedb 2b2200 554400 806600 aa8800";
var BOTTOM = "d4aa00 ffcc00 ffd42a ffdd55 ffe680 ffeeaa fff6d5 28220b 504416 786721 a0892c c8ab37 d3bc5f decd87 e9ddaf f4eed7 24221c 484537 6c6753 918a6f aca793 c8c4b7 e3e2db 222b00 445500 668000 88aa00 aad400 ccff00 d4ff2a ddff55 e5ff80 eeffaa f6ffd5 22280b 445016 677821 89a02c abc837 bcd35f cdde87 dde9af eef4d7 22241c 454837 676c53 8a916f a7ac93 c4c8b7 e2e3db 112b00 225500 338000 44aa00 55d400 66ff00 7fff2a 99ff55 b3ff80 ccffaa e5ffd5 1c280b 2d5016 447821 5aa02c 71c837 8dd35f aade87 c6e9af e3f4d7 1f241c 3e4837 5d6c53 7c916f 9dac93 bec8b7 dee3db 002b00 005500 008000 00aa00";

function buildPalette() {
  var host = document.getElementById("swatches");
  (TOP + " " + BOTTOM).split(" ").forEach(function (c) {
    var el = document.createElement("i");
    el.style.background = "#" + c;
    host.appendChild(el);
  });
}

buildH();
buildV();
buildPalette();
```
